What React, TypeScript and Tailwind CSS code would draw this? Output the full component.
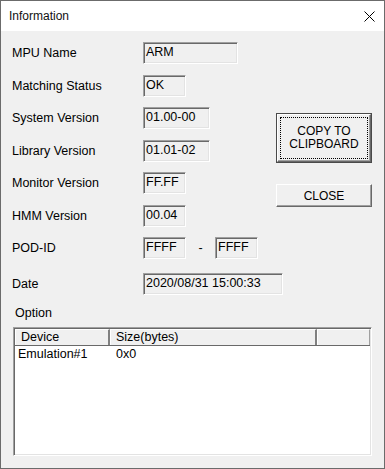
import React from "react";

type Field = {
    label: string;
    value: string;
    width: string;
    gap: string;
};

const fields: Field[] = [
    { label: "MPU Name", value: "ARM", width: "w-[95px]", gap: "mt-0" },
    { label: "Matching Status", value: "OK", width: "w-[43px]", gap: "mt-[11px]" },
    { label: "System Version", value: "01.00-00", width: "w-[67px]", gap: "mt-[10px]" },
    { label: "Library Version", value: "01.01-02", width: "w-[67px]", gap: "mt-[11px]" },
    { label: "Monitor Version", value: "FF.FF", width: "w-[43px]", gap: "mt-[10px]" },
    { label: "HMM Version", value: "00.04", width: "w-[43px]", gap: "mt-[11px]" },
];

const sunken =
    "shrink-0 h-[22px] border border-t-[#a0a0a0] border-l-[#a0a0a0] border-b-white border-r-white shadow-[inset_1px_1px_0_#696969,inset_-1px_-1px_0_#e3e3e3] bg-[#f0f0f0] pl-[2px] pb-[2px] flex items-center leading-[14px] whitespace-nowrap";

const SunkenBox = ({ value, width }: { value: string; width: string }) => (
    <div className={`${sunken} ${width}`}>{value}</div>
);

const Row = ({ label, gap, children }: { label: string; gap: string; children: React.ReactNode }) => (
    <div className={`flex items-center h-[22px] ${gap}`}>
        <div className="shrink-0 w-[131px] leading-[14px]">{label}</div>
        {children}
    </div>
);

const App = () => {
    return (
        <div className="w-[385px] h-[469px] border border-[#6b6b6b] bg-[#f0f0f0] flex flex-col text-[12.5px] text-black font-['Liberation_Sans',sans-serif]">
            {/* title bar */}
            <div className="h-[30px] bg-white flex items-center justify-between pl-[8px] pr-[9px]">
                <span className="text-[12px] leading-[14px] text-[#111]">Information</span>
                <svg width="11" height="11" viewBox="0 0 11 11">
                    <path d="M0.5 0.5 L10.5 10.5 M10.5 0.5 L0.5 10.5" stroke="#000" strokeWidth="1" fill="none" />
                </svg>
            </div>

            <div className="flex-1 pl-[11px] pt-[11px] flex flex-col">
                <div className="flex">
                    <div className="w-[264px] shrink-0 flex flex-col">
                        {fields.map((f) => (
                            <Row key={f.label} label={f.label} gap={f.gap}>
                                <SunkenBox value={f.value} width={f.width} />
                            </Row>
                        ))}
                        <Row label="POD-ID" gap="mt-[10px]">
                            <SunkenBox value="FFFF" width="w-[43px]" />
                            <div className="shrink-0 w-[29px] text-center leading-[14px]">-</div>
                            <SunkenBox value="FFFF" width="w-[43px]" />
                        </Row>
                        <Row label="Date" gap="mt-[14px]">
                            <SunkenBox value="2020/08/31 15:00:33" width="w-[140px]" />
                        </Row>
                    </div>

                    <div className="flex flex-col pt-[71px] text-[12px]">
                        <button className="w-[96px] h-[50px] border border-[#4a4a4a] bg-[#f0f0f0] p-0">
                            <div className="w-full h-full border border-t-white border-l-white border-b-[#696969] border-r-[#696969] shadow-[inset_-1px_-1px_0_#a0a0a0] p-[2px]">
                                <div className="w-full h-full border border-dotted border-black flex items-center justify-center text-center leading-[13px]">
                                    COPY TO<br />CLIPBOARD
                                </div>
                            </div>
                        </button>
                        <button className="mt-[21px] w-[96px] h-[23px] border border-t-white border-l-white border-b-[#696969] border-r-[#696969] shadow-[inset_-1px_-1px_0_#a0a0a0] bg-[#f0f0f0] leading-[14px] p-0">
                            CLOSE
                        </button>
                    </div>
                </div>

                <div className="mt-[11px] h-[15px] leading-[15px] pl-[3px]">Option</div>

                {/* list view */}
                <div className="mt-[6px] ml-[1px] w-[359px] h-[129px] border border-t-[#a0a0a0] border-l-[#a0a0a0] border-b-white border-r-white shadow-[inset_1px_1px_0_#696969,inset_-1px_-1px_0_#e3e3e3] bg-white p-[1px] flex flex-col">
                    <div className="flex h-[17px] bg-[#f0f0f0] border-b border-[#696969]">
                        <div className="w-[95px] border-t border-l border-white border-r-2 border-r-[#808080] pl-[5px] leading-[15px]">Device</div>
                        <div className="w-[207px] border-t border-l border-white border-r-2 border-r-[#808080] pl-[5px] leading-[15px]">Size(bytes)</div>
                        <div className="flex-1 border-t border-l border-white border-r border-r-[#a0a0a0]"></div>
                    </div>
                    <div className="flex h-[16px] leading-[16px]">
                        <div className="w-[98px] pl-[3px]">Emulation#1</div>
                        <div className="pl-[3px]">0x0</div>
                    </div>
                </div>
            </div>
        </div>
    );
};

export default App;
